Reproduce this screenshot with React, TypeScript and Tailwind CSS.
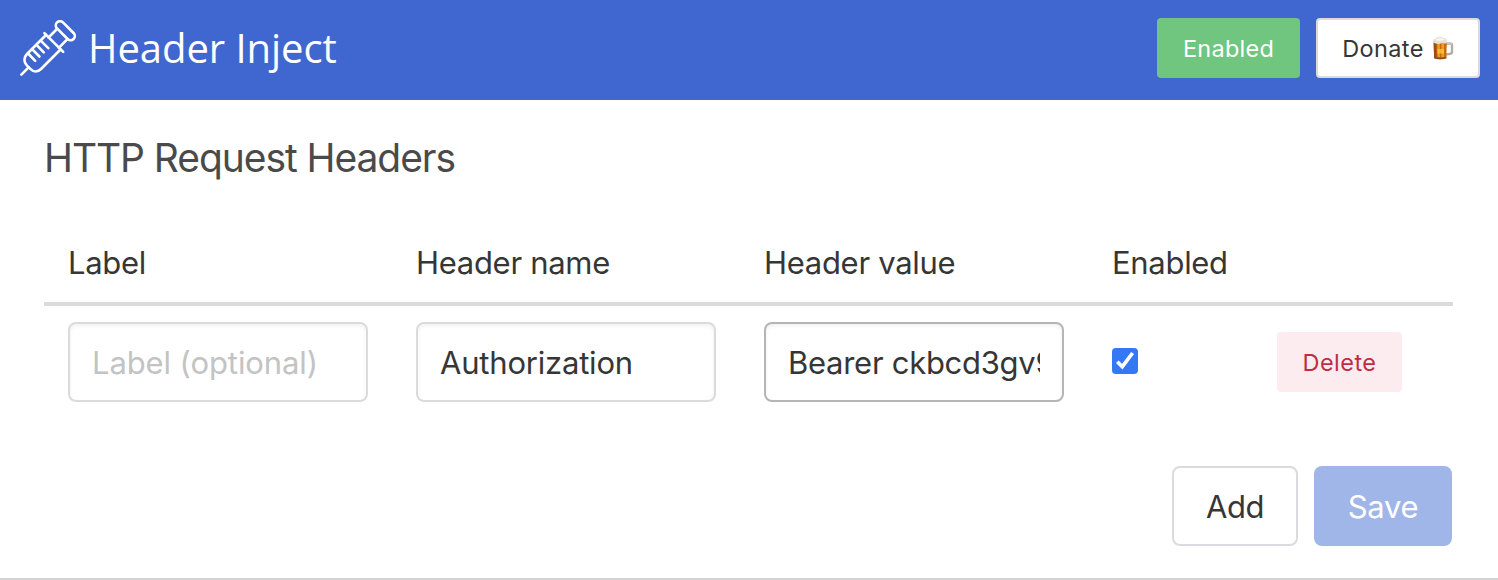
import type { ReactNode } from "react";

const inputBase =
  "block h-20 w-[300px] rounded-lg border-2 bg-white px-[22px] text-[31px] text-[#363636] shadow-[inset_0_2px_4px_rgba(10,10,10,0.06)] outline-none placeholder:text-[#c3c3c3] placeholder:opacity-100";

function Syringe() {
  return (
    <svg
      className="h-14 w-14 shrink-0"
      viewBox="0 0 56 56"
      fill="none"
      stroke="white"
      strokeWidth="2.6"
      strokeLinecap="round"
      strokeLinejoin="round"
    >
      <path d="M1.4 54.6 8.6 47.4" />
      <path d="M26 15 7 34C3.6 37.4 3.6 42.2 6.8 45.4L10.6 49.2C13.8 52.4 17.8 52.2 21 49L40.5 29.5" />
      <path d="M24.4 13.1 43.2 31.9" />
      <path d="M28.5 17.5 37 9M38.8 27.8 47.4 19.2" />
      <rect x="-11.7" y="-4.2" width="23.4" height="8.4" rx="4.2" transform="translate(45.3 10.7) rotate(45)" />
      <path d="M8.6 34 15.2 40.8M12.8 29.8 19.4 36.5M17 25.4 23.8 32.3M21 20.8 28.3 28.2" />
    </svg>
  );
}

function Beer() {
  return (
    <svg className="h-6 w-[22px] shrink-0" viewBox="0 0 22 24">
      <path d="M14 7.5h4.2c1.2 0 1.8.6 1.8 1.8v6.4c0 1.4-.8 2-2 2.2L14 18.5" fill="none" stroke="#b3aca5" strokeWidth="2.4" />
      <path d="M14.5 7.2h3.7c1.2 0 1.6.5 1.6 1.6" fill="none" stroke="#ddd8d2" strokeWidth="1" />
      <path d="M1.6 5h13.2l-.5 17c-2.4 1.5-9.8 1.5-12.2 0z" fill="#c96a0c" />
      <path d="M1.6 5h2.6l.5 17.4-2.6-.6z" fill="#9a4e10" />
      <path d="M5.3 7h2.5v14.5H5.6zM9.5 7h2.6l-.2 14.5H9.5z" fill="#eda023" />
      <path d="M5.4 13h6.6v4.5H5.5z" fill="#ffc43a" opacity=".8" />
      <path d="M2 20.5c3 1.4 9.5 1.4 12.4 0v1.7c-2.9 1.3-9.5 1.3-12.3 0z" fill="#8f4d1c" />
      <path d="M1 6.5C.6 3.5 2.6 2.8 4 2.3 6 .4 9.5.4 11.5 2c2.6 0 3.9 1.9 3.6 4.8-2 1.4-4-.3-6 .6-2.5 1-5.5.3-8.1-.9z" fill="#e9e0d4" />
      <path d="M3.5 4C6 1.5 10 1.8 12.5 3.6 9.5 5.5 6 5.2 3.5 4z" fill="#faf7f2" />
    </svg>
  );
}

function HeadCell({ children }: { children?: ReactNode }) {
  return <div className="pl-6">{children}</div>;
}

const columns = "grid grid-cols-[348px_348px_348px_165px_200px]";

export default function App() {
  return (
    <div className="flex h-[580px] w-full flex-col overflow-hidden border-b-2 border-[#d3d3d6] bg-white font-['Inter','Liberation_Sans',sans-serif] text-[#363636]">
      <header className="flex h-[100px] shrink-0 items-start justify-between bg-[#4066cf] pr-[18px] pl-5">
        <div className="flex pt-5">
          <Syringe />
          <h1 className="ml-3 font-['Open_Sans','Noto_Sans',sans-serif] text-[40px] leading-[56px] font-normal tracking-[-0.06px] whitespace-nowrap text-white">
            Header Inject
          </h1>
        </div>
        <div className="flex gap-4 pt-[18px]">
          <button className="flex h-[60px] w-[143px] items-center justify-center rounded bg-[#70c57f] pt-0.5 text-[23.5px] tracking-[0.25px] text-white">
            Enabled
          </button>
          <button className="flex h-[60px] w-[164px] items-center justify-center gap-2 rounded border-2 border-[#dbdbdb] bg-white text-[23.5px] tracking-[0.35px]">
            <span className="pt-0.5">Donate</span>
            <Beer />
          </button>
        </div>
      </header>

      <main className="flex flex-col pr-[45px] pl-11">
        <h2 className="mt-[35px] text-[39px] leading-[45px] tracking-[-1.07px] whitespace-nowrap text-[#4a4a4a]">
          HTTP Request Headers
        </h2>

        <div className={`${columns} mt-[59px] h-[67px] border-b-4 border-[#dbdbdb] text-[31px] leading-12 tracking-[-0.3px]`}>
          <HeadCell>Label</HeadCell>
          <HeadCell>Header name</HeadCell>
          <HeadCell>Header value</HeadCell>
          <HeadCell>Enabled</HeadCell>
          <HeadCell />
        </div>

        <div className={`${columns} mt-4 h-20 items-center`}>
          <div className="pl-6">
            <input className={`${inputBase} border-[#dbdbdb] tracking-[-0.1px]`} placeholder="Label (optional)" />
          </div>
          <div className="pl-6">
            <input className={`${inputBase} border-[#dbdbdb] tracking-[-0.2px]`} defaultValue="Authorization" />
          </div>
          <div className="pl-6">
            <input className={`${inputBase} border-[#b5b5b5] tracking-[-0.28px]`} defaultValue="Bearer ckbcd3gv9" />
          </div>
          <div className="pb-0.5 pl-6">
            <svg className="h-[26px] w-[26px]" viewBox="0 0 26 26" role="checkbox" aria-checked="true">
              <rect width="26" height="26" rx="4" fill="#3478f6" />
              <path d="M5.3 13.7 10.3 18.7 20.6 5" fill="none" stroke="white" strokeWidth="3.7" />
            </svg>
          </div>
          <div className="pl-6">
            <button className="h-[60px] w-[125px] rounded bg-[#fcecf0] pt-0.5 text-[23.5px] tracking-[0.45px] text-[#be2e43]">
              Delete
            </button>
          </div>
        </div>

        <div className="mt-16 flex justify-end gap-4 pr-px">
          <button className="h-20 w-[126px] rounded-lg border-2 border-[#dbdbdf] bg-white pt-0.5 text-[31px] tracking-[-0.5px]">Add</button>
          <button className="h-20 w-[138px] rounded-lg bg-[#a0b6e9] pt-0.5 text-[31px] tracking-[-0.3px] text-white">Save</button>
        </div>
      </main>
    </div>
  );
}
